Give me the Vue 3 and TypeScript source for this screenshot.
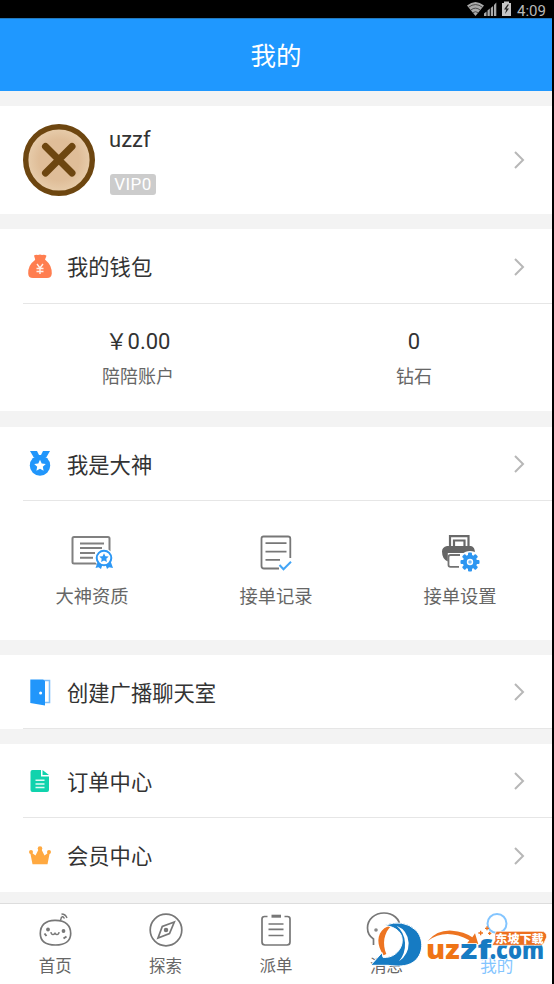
<script setup lang="ts">
interface Entry { id: string; label: string }

const services: Entry[] = [
  { id: 'cert', label: '大神资质' },
  { id: 'record', label: '接单记录' },
  { id: 'settings', label: '接单设置' },
]
const centers: Entry[] = [
  { id: 'order', label: '订单中心' },
  { id: 'member', label: '会员中心' },
]
const tabs: Entry[] = [
  { id: 'home', label: '首页' },
  { id: 'explore', label: '探索' },
  { id: 'dispatch', label: '派单' },
  { id: 'message', label: '消息' },
  { id: 'mine', label: '我的' },
]
const balances = [
  { value: '￥0.00', label: '陪陪账户' },
  { value: '0', label: '钻石' },
]
const teeth = [0, 45, 90, 135, 180, 225, 270, 315]
</script>

<template>
  <div class="phone">
    <div class="status">
      <svg class="signals" viewBox="0 0 46 18">
        <path d="M0 5.500Q8.500-1.500 17 5.500L8.500 16Z" fill="#aaa" />
        <path d="M1.500 7.300Q8.500 1.800 15.500 7.300M3.800 10Q8.500 6.300 13.200 10M6 12.600Q8.500 10.800 11 12.600" fill="none" stroke="#333" stroke-width=".8" />
        <path d="M17 16v-2.500l2.500-2V16zM20.500 16v-5.500l2.300-2V16zM23.800 16V8l2.300-2v10zM27 16V5l2.300-2.500V16z" fill="#aaa" />
        <path d="M35 3h2V1.500h5V3h2v13h-9z" fill="#c5c5c5" />
        <path d="M40.500 4.500 37 9.500h2.300L38 14l4-5.500h-2.500l2.500-4z" fill="#222" />
      </svg>
      <span class="clock">4:09</span>
    </div>
    <header class="title">我的</header>

    <section class="card profile">
      <svg class="avatar" viewBox="0 0 72 72">
        <defs><radialGradient id="tan"><stop offset=".6" stop-color="#dfbd98" /><stop offset="1" stop-color="#e8cead" /></radialGradient></defs>
        <circle cx="36" cy="36" r="33.300" fill="url(#tan)" stroke="#6d4610" stroke-width="5.400" />
        <path d="M22.500 22.500 49 49M49 22.500 22.500 49" stroke="#6d4610" stroke-width="7" stroke-linecap="round" />
      </svg>
      <div class="person">
        <span class="name">uzzf</span>
        <span class="vip">VIP0</span>
      </div>
      <svg class="chevron" viewBox="0 0 12 20"><path d="m2 2 8 8-8 8" /></svg>
    </section>

    <section class="card wallet">
      <div class="row lined">
        <svg class="icon" viewBox="0 0 26 28">
          <path d="M7 2.500q2-1.200 4-.4 2-1 4 0 2.500-.8 4.500.6L18 6.500l1 1q5.800 4.500 5.800 13Q24.500 25 20 25H6q-4.700 0-4.800-4.500Q1 12 7.500 7.500l.7-1z" fill="#ff7e50" />
          <path d="m10 11 3 4 3-4M13 15v6M9.500 15.500h7M9.500 18.500h7" stroke="#fff0e9" stroke-width="1.400" fill="none" />
        </svg>
        <span>我的钱包</span>
        <svg class="chevron" viewBox="0 0 12 20"><path d="m2 2 8 8-8 8" /></svg>
      </div>
      <div class="balances">
        <div v-for="b in balances" :key="b.label" class="balance">
          <strong>{{ b.value }}</strong><span>{{ b.label }}</span>
        </div>
      </div>
    </section>

    <section class="card expert">
      <div class="row lined">
        <svg class="icon" viewBox="0 0 26 28">
          <path d="M3 1h7l2 4h2l2-4h7l-3.500 6h-13z" fill="#2196fb" />
          <circle cx="13" cy="15.500" r="10.200" fill="#2196fb" />
          <path d="m13 9.800 1.700 3.700 4.100.5-3 2.800.8 4-3.600-2-3.600 2 .8-4-3-2.800 4.100-.5z" fill="#fff" />
        </svg>
        <span>我是大神</span>
        <svg class="chevron" viewBox="0 0 12 20"><path d="m2 2 8 8-8 8" /></svg>
      </div>
      <div class="services">
        <div v-for="s in services" :key="s.id" class="service">
          <svg v-if="s.id === 'cert'" viewBox="0 0 44 40">
            <rect x="2.500" y="5" width="37" height="26.500" rx="1.500" fill="none" stroke="#808080" stroke-width="2" />
            <path d="M10 11.500h24M10 16h22M10 21h15M10 25.800h13" stroke="#808080" stroke-width="2" />
            <circle cx="34" cy="26" r="9.500" fill="#fff" />
            <path d="m28 29-2.500 7 3-.8L31 37l2-6h2l2 6 2-1.800 4 .8-2.500-7z" fill="#2d98f5" />
            <circle cx="34" cy="26" r="7.300" fill="#fff" stroke="#2d98f5" stroke-width="2" />
            <path d="m34 21.200 1.400 3 3.300.4-2.400 2.200.6 3.300-2.900-1.600-2.900 1.600.6-3.300-2.400-2.200 3.300-.4z" fill="#2d98f5" />
          </svg>
          <svg v-else-if="s.id === 'record'" viewBox="0 0 44 40">
            <path d="M25 36.500H10q-2.500 0-2.500-2.500V6.500q0-2 2-2h24.500q2.300 0 2.300 2.300V26" fill="none" stroke="#777" stroke-width="1.800" />
            <path d="M11.500 11.200h21M11.500 19.700h21M11.500 27.800H26" stroke="#777" stroke-width="1.800" />
            <path d="m25.500 33 4 4.200 7.500-7.500" fill="none" stroke="#43a5f6" stroke-width="2" />
          </svg>
          <svg v-else viewBox="0 0 44 40">
            <path d="M12 16V4.200h18.500V16M16 15V8.500h10.500V15" fill="none" stroke="#696969" stroke-width="2.200" />
            <path d="M9 14h24q4 1 4 7H9.800v8.500Q4 27 4 19.500q0-4.500 5-5.500z" fill="#666" />
            <path d="M22 23H12.500q-2 0-2 2v8q0 1.800 2 1.800H21" fill="#fff" stroke="#737373" stroke-width="1.800" />
            <circle cx="32" cy="30" r="11" fill="#fff" />
            <g fill="#2d96f1"><rect v-for="a in teeth" :key="a" x="30" y="20.500" width="4" height="6" rx="1" :transform="`rotate(${a} 32 30)`" /></g>
            <circle cx="32" cy="30" r="5.200" fill="#fff" stroke="#2d96f1" stroke-width="4" />
            <circle cx="32" cy="30" r="1.800" fill="#7dbdf4" />
          </svg>
          <span>{{ s.label }}</span>
        </div>
      </div>
    </section>

    <section class="card">
      <div class="row lined">
        <svg class="icon" viewBox="0 0 26 28">
          <path d="M16 2.500h6.500v22H17" fill="none" stroke="#7fc0fa" stroke-width="1.600" />
          <path d="M3.300 1.500H16l2 1.500v24.500L3.300 25z" fill="#2196fb" /><circle cx="13.600" cy="15" r="1.500" fill="#fff" />
        </svg>
        <span>创建广播聊天室</span>
        <svg class="chevron" viewBox="0 0 12 20"><path d="m2 2 8 8-8 8" /></svg>
      </div>
    </section>

    <section class="card centers">
      <div v-for="(c, i) in centers" :key="c.id" class="row" :class="{ lined: i === 0 }">
        <svg v-if="c.id === 'order'" class="icon" viewBox="0 0 26 28">
          <path d="M5.500 3H14v6.500h8V23q0 2-2 2H5.500q-2 0-2-2V5q0-2 2-2zM15.500 3l6.500 5h-6.500z" fill="#10d3ad" />
          <path d="M8.500 13.300h9M8.500 17h9M8.500 20.500h9" stroke="#dffaf3" stroke-width="1.500" />
        </svg>
        <svg v-else class="icon" viewBox="0 0 26 28">
          <path d="m3 9.500 5.500 4L12 6.500h2l3.500 7 5.500-4-2.500 12.800h-15z" fill="#ffa940" />
          <g fill="#ffa940"><circle cx="4" cy="10" r="2" /><circle cx="13" cy="6.500" r="2.300" /><circle cx="22" cy="10" r="2" /></g>
        </svg>
        <span>{{ c.label }}</span>
        <svg class="chevron" viewBox="0 0 12 20"><path d="m2 2 8 8-8 8" /></svg>
      </div>
    </section>

    <nav class="tabs">
      <div v-for="t in tabs" :key="t.id" class="tab" :class="{ active: t.id === 'mine' }">
        <svg viewBox="0 0 36 36">
          <g v-if="t.id === 'home'">
            <path d="M18.500 8.300C8 8 3.300 14 3.300 21.500S9 33 18.500 33s15.200-4 15.200-11.500S29 8.500 18.500 8.300Z" />
            <path d="m23.500 8.500 1-3.500M24.500 2q4 0 5.500 4M24.500 4.500q2 0 3 2" stroke-width="1.400" />
            <path d="M14 20q0 2.500 2 2.500t2-2q0 2 2 2t2-2.500" stroke-width="1.300" /><path d="m7.500 21.500 2 2.500M26.500 26.500l3-2" stroke-width="2" />
            <g fill="#777" stroke="none"><circle cx="11" cy="17.500" r="1.900" /><circle cx="26.500" cy="19" r="1.900" /></g>
          </g>
          <g v-else-if="t.id === 'explore'">
            <circle cx="18" cy="18" r="15.800" /><path d="m26.300 10-12 4.500-4.300 11.500 11.500-4.500z" /><circle cx="18" cy="18" r="1.400" fill="#777" />
          </g>
          <g v-else-if="t.id === 'dispatch'">
            <path d="M9.500 4.500H6.500Q4 4.500 4 7v23Q4 33 7 33H29q3 0 3-3V7q0-2.500-2.500-2.500h-3M10.500 12h15M10.500 17.300h15M10.500 23.500h15" /><path d="M13.500 4.200h9.500" stroke-width="3" />
          </g>
          <g v-else-if="t.id === 'message'">
            <path d="M5.500 33v-6Q-.5 23 -.5 16C-.5 7 7 1 16 1s16 6 16 14" /><circle cx="8" cy="18" r="1.800" fill="#888" stroke="none" /><circle cx="18.500" cy="18" r="1.800" fill="#888" stroke="none" />
          </g>
          <g v-else><circle cx="18" cy="11.500" r="9.500" stroke-width="2" /></g>
        </svg>
        <span>{{ t.label }}</span>
      </div>
    </nav>

    <svg class="watermark" viewBox="0 0 600 267">
      <path d="M81 185C68 155 71 108 97 91l33-3c-38 20-48 66-35 100z" fill="#fff" />
      <path d="M89 181C67 151 68 117 91 100q12-8 23-9c-26 23-29 57-17 86z" fill="#ed7421" />
      <path d="M91 91q57-20 94 14c26 26 25 75-8 97-20 13-47 13-74 9H50l34-38 3 14c28 3 52-16 57-42 5-30-15-49-53-54z" fill="#167bc3" stroke="#fff" stroke-width="3" />
      <path d="M128 92q34 14 36 52 0 35-29 55 20-25 18-56-2-31-25-51z" fill="#fff" />
      <path d="M221 138Q250 104 294 107q36 2 61 20l8-12 10 33-37 1 10-13q-71-39-125 2z" fill="#ed7421" />
      <g font-family="Open Sans, sans-serif" font-weight="800" font-size="80" stroke="#fff" stroke-width="5" paint-order="stroke">
        <text x="216" y="192" textLength="101" lengthAdjust="spacingAndGlyphs" fill="#ef7416">uz</text>
        <text x="319" y="192" textLength="93" lengthAdjust="spacingAndGlyphs" fill="#167bc3">zf</text>
        <text x="407" y="192" textLength="163" lengthAdjust="spacingAndGlyphs" fill="#167bc3">.com</text>
      </g>
      <path d="M380 107v14M373 114h14M399 94v12M393 100h12M407 110v10M402 115h10" stroke="#ed7421" stroke-width="4" />
      <path d="M431 109h130q17 0 17 17l-5 11q-4 14-18 14H414l9-15V118q0-9 8-9z" fill="#ed6f20" stroke="#fff" stroke-width="2" />
      <text x="424" y="143" textLength="145" lengthAdjust="spacingAndGlyphs" fill="#fff" font-family="Noto Sans CJK SC, sans-serif" font-weight="900" font-size="35">东坡下载</text>
    </svg>
  </div>
</template>

<style>
body { margin: 0; background: #000; }
</style>

<style scoped>
.phone { box-sizing: border-box; position: relative; width: 554px; height: 984px; border-right: 2px solid #000; background: #f3f3f3; overflow: hidden; color: #333; font-family: Roboto, "Noto Sans CJK SC", sans-serif; display: flex; flex-direction: column; gap: 15px; }
.status { height: 18px; flex: none; background: #000; display: flex; justify-content: flex-end; padding-right: 6px; gap: 4px; margin-bottom: -15px; }
.signals { width: 46px; height: 18px; }
.clock { color: #b8b8b8; font-size: 15px; line-height: 22px; width: 29px; }
.title { height: 73px; flex: none; background: #1f98ff; color: #fff; text-align: center; font-size: 25.500px; line-height: 75px; border-top: 1px solid #2379bd; box-sizing: border-box; }
.card { background: #fff; flex: none; }
.profile { height: 108px; display: flex; align-items: center; padding: 0 27px 0 23px; box-sizing: border-box; }
.avatar { width: 72px; height: 72px; }
.person { display: flex; flex-direction: column; align-items: flex-start; gap: 20px; margin: 1px 0 0 14px; }
.name { font-size: 22px; line-height: 28px; }
.vip { box-sizing: border-box; width: 46px; height: 21px; margin-left: 1px; border-radius: 3px; background: #ccc; color: #fff; font-size: 17px; line-height: 21px; text-align: center; letter-spacing: .5px; }
.chevron { width: 12px; height: 20px; margin-left: auto; fill: none; stroke: #b7b7b7; stroke-width: 2; }
.row { height: 74px; box-sizing: border-box; display: flex; align-items: center; margin-left: 23px; padding: 1px 27px 0 4px; font-size: 21.300px; }
.row > span { margin: -2px 0 0 14px; }
.lined { border-bottom: 1px solid #e6e6e6; }
.icon { width: 26px; height: 28px; }
.wallet { height: 182px; }
.wallet .row { height: 75px; }
.balances { display: grid; grid-template-columns: 1fr 1fr; padding-top: 22px; }
.balance { display: flex; flex-direction: column; align-items: center; gap: 6px; }
.balance strong { font-size: 22px; font-weight: 400; line-height: 31px; }
.balance span { font-size: 18px; line-height: 27px; color: #666; }
.expert { height: 213px; margin-top: 1px; }
.services { display: grid; grid-template-columns: repeat(3, 1fr); padding-top: 31px; }
.service { display: flex; flex-direction: column; align-items: center; gap: 11px; font-size: 18.300px; line-height: 27px; color: #666; }
.service svg { width: 44px; height: 40px; }
.centers { height: 148px; }
.tabs { height: 81px; flex: none; background: #fff; border-top: 1px solid #ddd; box-sizing: border-box; display: grid; grid-template-columns: repeat(5, 1fr); margin-top: -4px; }
.tab { display: flex; flex-direction: column; align-items: center; padding-top: 8px; gap: 7px; color: #666; font-size: 16.500px; line-height: 24px; }
.tab svg { width: 36px; height: 36px; fill: none; stroke: #777; stroke-width: 1.700; overflow: visible; }
.active { color: #83c5ff; }
.tab.active svg { stroke: #83c5ff; }
.watermark { position: absolute; left: 354px; top: 895px; width: 200px; height: 89px; }
</style>
